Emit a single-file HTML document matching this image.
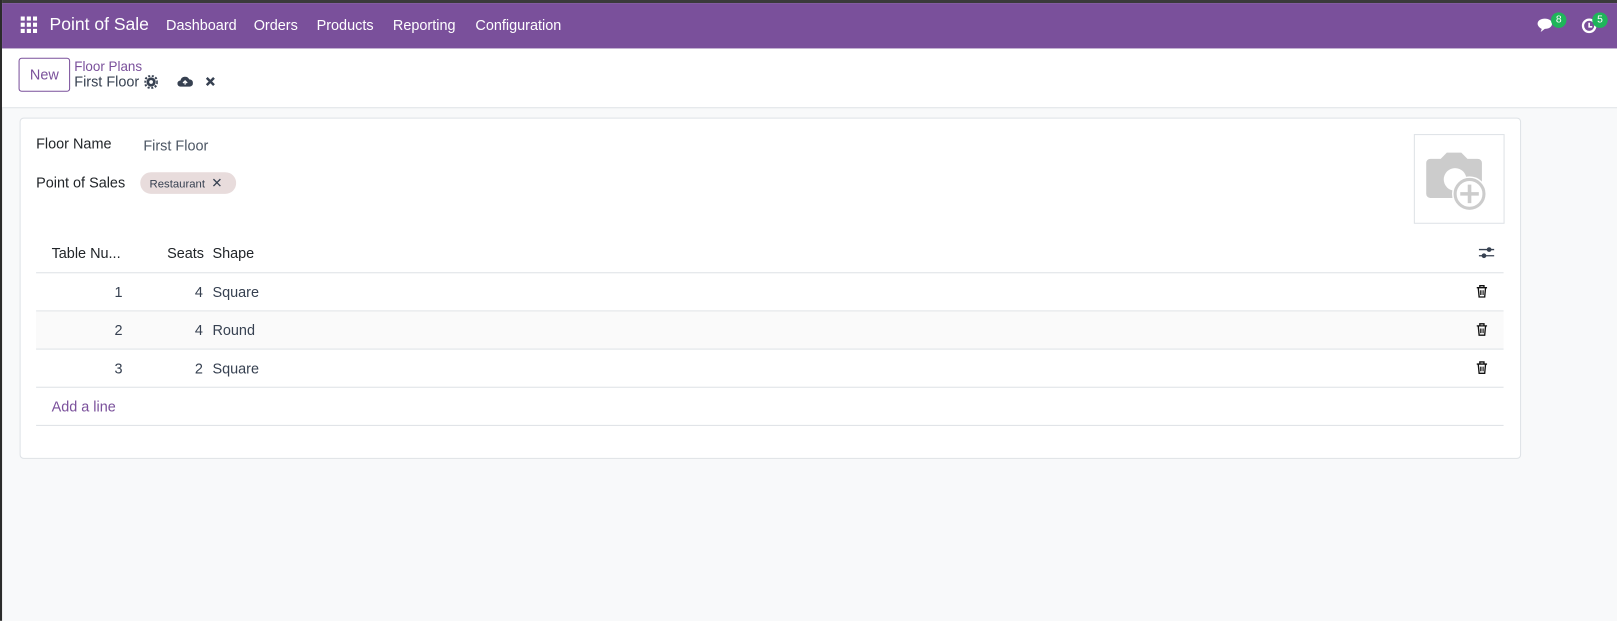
<!DOCTYPE html>
<html><head><meta charset="utf-8"><style>
*{box-sizing:border-box;margin:0;padding:0}
html,body{width:1617px;height:621px;overflow:hidden;background:#f8f9fa}
#w{position:absolute;left:0;top:0;width:1568px;height:602px;transform:scale(1.03125);transform-origin:0 0;font-family:"Liberation Sans",sans-serif;font-size:14px;color:#374151;border-left:2px solid #2b2b2b;background:#f8f9fa}
.top{position:absolute;left:0;top:0;width:1568px;height:3px;background:#3a3a3a}
.nav{position:absolute;left:0;top:3px;width:1568px;height:44px;background:#7a509b;color:#fff}
.nav span{position:absolute;top:13px;font-size:14px}
.cp{position:absolute;left:0;top:47px;width:1568px;height:58px;background:#fff;border-bottom:1px solid #dee2e6}
.card{position:absolute;left:17px;top:114px;width:1456px;height:331px;background:#fff;border:1px solid #dee2e6;border-radius:4px}
.abs{position:absolute}
.row{position:absolute;left:33px;width:1423px;height:37px;border-bottom:1px solid #dee2e6}
.badge{position:absolute;background:#1fb55a;color:#fff;font-size:10px;border-radius:8px;width:15px;height:15px;text-align:center;line-height:15px}
</style></head><body><div id="w">
<div class="top"></div>
<div class="nav">
<svg class="abs" style="left:18px;top:13px" width="16" height="16"><g fill="#fff"><rect x="0" y="0" width="4" height="4"/><rect x="6" y="0" width="4" height="4"/><rect x="12" y="0" width="4" height="4"/><rect x="0" y="6" width="4" height="4"/><rect x="6" y="6" width="4" height="4"/><rect x="12" y="6" width="4" height="4"/><rect x="0" y="12" width="4" height="4"/><rect x="6" y="12" width="4" height="4"/><rect x="12" y="12" width="4" height="4"/></g></svg>
<span style="left:46px;top:11px;font-size:17px">Point of Sale</span>
<span style="left:159px">Dashboard</span><span style="left:244px">Orders</span><span style="left:305px">Products</span><span style="left:379px">Reporting</span><span style="left:459px">Configuration</span>
<svg class="abs" style="left:1488px;top:14px" width="18" height="16"><path d="M1 6c0-3 3-5 7-5s7 2 7 5-3 5-7 5l-4 3 1-3C3 10 1 8 1 6z" fill="#fff"/></svg>
<div class="badge" style="left:1502px;top:9px">8</div>
<svg class="abs" style="left:1531px;top:14px" width="16" height="16"><circle cx="8" cy="8" r="6" fill="none" stroke="#fff" stroke-width="2.2"/><path d="M8 5v4h3" stroke="#fff" stroke-width="1.6" fill="none"/></svg>
<div class="badge" style="left:1542px;top:9px">5</div>
</div>
<div class="cp">
<div class="abs" style="left:16px;top:9px;width:50px;height:33px;border:1px solid #7a509b;border-radius:3px;color:#7a509b;text-align:center;line-height:31px;font-size:14px">New</div>
<div class="abs" style="left:70px;top:10px;color:#7a509b;font-size:13px">Floor Plans</div>
<div class="abs" style="left:70px;top:24px;font-size:14px;color:#374151">First Floor</div>
<svg class="abs" style="left:138px;top:26px" width="13" height="13"><circle cx="6.5" cy="6.5" r="4.5" fill="#374151"/><circle cx="6.5" cy="6.5" r="6" fill="none" stroke="#374151" stroke-width="2" stroke-dasharray="2 1.6"/><circle cx="6.5" cy="6.5" r="1.8" fill="#fff"/></svg>
<svg class="abs" style="left:170px;top:26px" width="15" height="12"><path d="M3 11a3 3 0 0 1 0-6 4.5 4.5 0 0 1 8.5-1A3.5 3.5 0 0 1 12 11z" fill="#374151"/><path d="M7.5 9V5.5M5.5 7.5l2-2 2 2" stroke="#fff" stroke-width="1.3" fill="none"/></svg>
<svg class="abs" style="left:197px;top:27px" width="10" height="10"><path d="M1.5 1.5l7 7M8.5 1.5l-7 7" stroke="#374151" stroke-width="2.4"/></svg>
</div>
<div class="card"></div>
<div class="abs" style="left:33px;top:131px;color:#212529;font-size:14px">Floor Name</div>
<div class="abs" style="left:137px;top:133px;color:#4b5563">First Floor</div>
<div class="abs" style="left:33px;top:169px;color:#212529">Point of Sales</div>
<div class="abs" style="left:134px;top:167px;width:93px;height:21px;border-radius:11px;background:#e8dcdc;font-size:11px;color:#374151;line-height:21px;padding-left:9px">Restaurant <span style="margin-left:3px;font-size:13px">✕</span></div>
<div class="abs" style="left:1369px;top:130px;width:88px;height:87px;border:1px solid #dee2e6;background:#fff">
<svg class="abs" style="left:9px;top:15px" width="70" height="62"><path d="M2 12a4 4 0 0 1 4-4h10l6-6h14l6 6h10a4 4 0 0 1 4 4v30a4 4 0 0 1-4 4H6a4 4 0 0 1-4-4z" fill="#ccc"/><circle cx="30" cy="28" r="11" fill="#fff"/><circle cx="44" cy="42" r="17" fill="#fff"/><circle cx="44" cy="42" r="14" fill="none" stroke="#ccc" stroke-width="3"/><path d="M44 33v18M35 42h18" stroke="#ccc" stroke-width="3.5"/></svg>
</div>
<div class="row" style="top:228px;color:#212529">
<span class="abs" style="left:15px;top:9px">Table Nu...</span><span class="abs" style="left:127px;top:9px">Seats</span><span class="abs" style="left:171px;top:9px">Shape</span>
<svg class="abs" style="left:1399px;top:10px" width="15" height="14"><path d="M0 4h15M0 10h15" stroke="#374151" stroke-width="1.3"/><circle cx="10" cy="4" r="2.3" fill="#374151"/><circle cx="5" cy="10" r="2.3" fill="#374151"/></svg>
</div>
<div class="row" style="top:265px"><span class="abs" style="left:76px;top:10px">1</span><span class="abs" style="left:154px;top:10px">4</span><span class="abs" style="left:171px;top:10px">Square</span></div>
<div class="row" style="top:302px;background:#fafafa"><span class="abs" style="left:76px;top:10px">2</span><span class="abs" style="left:154px;top:10px">4</span><span class="abs" style="left:171px;top:10px">Round</span></div>
<div class="row" style="top:339px"><span class="abs" style="left:76px;top:10px">3</span><span class="abs" style="left:154px;top:10px">2</span><span class="abs" style="left:171px;top:10px">Square</span></div>
<div class="row" style="top:376px"><span class="abs" style="left:15px;top:10px;color:#7a509b">Add a line</span></div>
<svg class="abs" style="left:1429px;top:276px" width="12" height="13"><path d="M1 3h10M4 3V1h4v2M2.5 3.5l.8 8.5h5.4l.8-8.5" stroke="#111" stroke-width="1.3" fill="none"/><path d="M4.7 5.5v4.5M6 5.5v4.5M7.3 5.5v4.5" stroke="#111" stroke-width=".8"/></svg>
<svg class="abs" style="left:1429px;top:313px" width="12" height="13"><path d="M1 3h10M4 3V1h4v2M2.5 3.5l.8 8.5h5.4l.8-8.5" stroke="#111" stroke-width="1.3" fill="none"/><path d="M4.7 5.5v4.5M6 5.5v4.5M7.3 5.5v4.5" stroke="#111" stroke-width=".8"/></svg>
<svg class="abs" style="left:1429px;top:350px" width="12" height="13"><path d="M1 3h10M4 3V1h4v2M2.5 3.5l.8 8.5h5.4l.8-8.5" stroke="#111" stroke-width="1.3" fill="none"/><path d="M4.7 5.5v4.5M6 5.5v4.5M7.3 5.5v4.5" stroke="#111" stroke-width=".8"/></svg>
</div></body></html>
